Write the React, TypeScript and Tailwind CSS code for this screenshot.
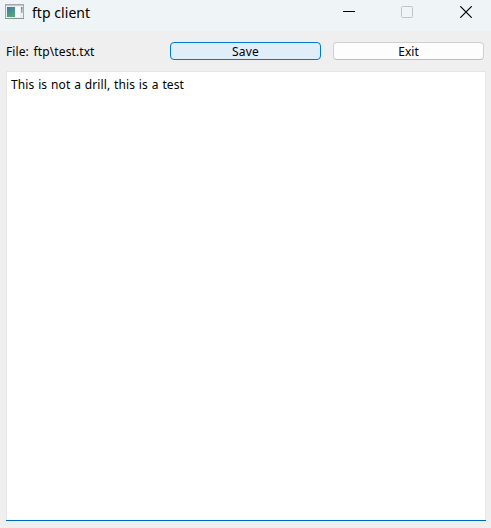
export default function App() {
  return (
    <div className="flex h-[528px] w-[491px] flex-col overflow-hidden bg-[#efefef] font-['Noto_Sans','Open_Sans',sans-serif] text-black">
      <header className="flex h-[31px] shrink-0 items-start bg-[#eff4f6]">
        <svg className="ml-[5px] mt-1 h-[16px] w-[19px] shrink-0" viewBox="0 0 19 16">
          <defs>
            <linearGradient id="pane" x1="0" y1="0" x2="0.6" y2="1">
              <stop offset="0" stopColor="#4275a5" />
              <stop offset="1" stopColor="#55a77d" />
            </linearGradient>
            <linearGradient id="sliver" x1="0" y1="0" x2="0" y2="1">
              <stop offset="0" stopColor="#5a87ac" />
              <stop offset="1" stopColor="#8cc5a0" />
            </linearGradient>
          </defs>
          <rect x="0.5" y="0.5" width="18" height="14" fill="#eceff1" stroke="#a3a8ac" />
          <path d="M0 14.5h19" stroke="#8f9498" />
          <path d="M1 1.5h17" stroke="#c3c9cd" />
          <rect x="2" y="3" width="8" height="10" fill="url(#pane)" />
          <rect x="11" y="3" width="4" height="10" fill="#fafafa" />
          <rect x="16" y="3" width="1.5" height="6" fill="url(#sliver)" />
        </svg>
        <h1 className="ml-2 h-[26px] w-[120px] whitespace-nowrap text-[14px] leading-[26px] tracking-[0.05px]">ftp client</h1>
        <div className="ml-auto flex h-6 shrink-0 items-center pr-[19px]">
          <svg className="h-[13px] w-[12px]" viewBox="0 0 12 13">
            <path d="M0 5.5h12" stroke="#000" />
          </svg>
          <svg className="ml-[46px] h-[12px] w-[12px]" viewBox="0 0 12 12" fill="none">
            <rect x="0.5" y="0.5" width="11" height="11" rx="1" stroke="#c2c5c6" />
          </svg>
          <svg className="ml-[47px] h-[12px] w-[12px]" viewBox="0 0 12 12">
            <path d="M0.3 0.3l11.4 11.4M11.7 0.3L0.3 11.7" stroke="#000" strokeWidth="1.2" />
          </svg>
        </div>
      </header>
      <main className="flex flex-1 flex-col px-[6px] pt-[11px]">
        <div className="flex h-[18px] items-center text-[12px] leading-[18px]">
          <span className="w-[164px] shrink-0 whitespace-nowrap pt-[2px] tracking-[0.1px] [word-spacing:1.5px]">File: ftp\test.txt</span>
          <button className="flex h-[18px] w-[151px] shrink-0 items-center justify-center rounded-[4px] border border-[#0078d4] bg-[#e0eef9] pt-[2px] tracking-[0.2px]">
            Save
          </button>
          <button className="ml-[12px] flex h-[18px] w-[151px] shrink-0 items-center justify-center rounded-[4px] border border-[#d0d0d0] border-b-[#bcbcbc] bg-[#fdfdfd] pt-[2px]">
            Exit
          </button>
        </div>
        <div className="mt-[11px] flex h-[450px] w-[480px] flex-col">
          <div className="flex-1 border border-b-0 border-[#e5e5e5] bg-white pl-1 pt-1 text-[12px] leading-[18px] tracking-[0.1px] [word-spacing:0.6px]">
            This is not a drill, this is a test
          </div>
          <div className="h-px bg-[#0067c0]" />
        </div>
      </main>
    </div>
  );
}
